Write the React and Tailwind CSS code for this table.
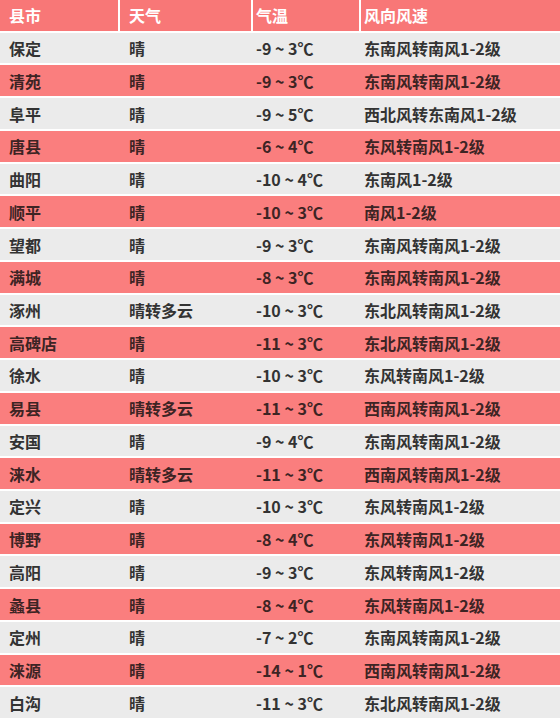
const rows = [
  ["保定", "晴", "-9 ~ 3℃", "东南风转南风1-2级"],
  ["清苑", "晴", "-9 ~ 3℃", "东南风转南风1-2级"],
  ["阜平", "晴", "-9 ~ 5℃", "西北风转东南风1-2级"],
  ["唐县", "晴", "-6 ~ 4℃", "东风转南风1-2级"],
  ["曲阳", "晴", "-10 ~ 4℃", "东南风1-2级"],
  ["顺平", "晴", "-10 ~ 3℃", "南风1-2级"],
  ["望都", "晴", "-9 ~ 3℃", "东南风转南风1-2级"],
  ["满城", "晴", "-8 ~ 3℃", "东南风转南风1-2级"],
  ["涿州", "晴转多云", "-10 ~ 3℃", "东北风转南风1-2级"],
  ["高碑店", "晴", "-11 ~ 3℃", "东北风转南风1-2级"],
  ["徐水", "晴", "-10 ~ 3℃", "东风转南风1-2级"],
  ["易县", "晴转多云", "-11 ~ 3℃", "西南风转南风1-2级"],
  ["安国", "晴", "-9 ~ 4℃", "东南风转南风1-2级"],
  ["涞水", "晴转多云", "-11 ~ 3℃", "西南风转南风1-2级"],
  ["定兴", "晴", "-10 ~ 3℃", "东风转南风1-2级"],
  ["博野", "晴", "-8 ~ 4℃", "东风转南风1-2级"],
  ["高阳", "晴", "-9 ~ 3℃", "东风转南风1-2级"],
  ["蠡县", "晴", "-8 ~ 4℃", "东风转南风1-2级"],
  ["定州", "晴", "-7 ~ 2℃", "东南风转南风1-2级"],
  ["涞源", "晴", "-14 ~ 1℃", "西南风转南风1-2级"],
  ["白沟", "晴", "-11 ~ 3℃", "东北风转南风1-2级"],
];

const Row = ({ cells, className }) => (
  <div className={`grid grid-cols-[118px_131px_106px_1fr] gap-x-[2px] h-[30.8px] ${className}`}>
    <div className="flex items-center pl-[9px] bg-inherit">{cells[0]}</div>
    <div className="flex items-center pl-[9px] bg-inherit">{cells[1]}</div>
    <div className="flex items-center pl-[3px] bg-inherit">{cells[2]}</div>
    <div className="flex items-center pl-[3px] bg-inherit">{cells[3]}</div>
  </div>
);

const App = () => {
  return (
    <div
      className="w-[560px] h-[718px] overflow-hidden bg-white flex flex-col gap-y-[2px] text-[16px] font-bold"
      style={{ fontFamily: '"Noto Sans CJK SC", "Noto Sans", sans-serif' }}
    >
      <div className="grid grid-cols-[118px_131px_106px_1fr] gap-x-[2px] h-[30.8px] text-white">
        <div className="flex items-center pl-[9px] bg-[#f87777]">县市</div>
        <div className="flex items-center pl-[9px] bg-[#f87777]">天气</div>
        <div className="flex items-center pl-[3px] bg-[#f87777]">气温</div>
        <div className="flex items-center pl-[3px] bg-[#f87777]">风向风速</div>
      </div>
      {rows.map((r, i) => (
        <Row
          key={r[0]}
          cells={r}
          className={i % 2 === 0 ? "bg-[#ebebeb] text-[#333333]" : "bg-[#fa7e7e] text-[#3d2424]"}
        />
      ))}
    </div>
  );
};

export default App;
